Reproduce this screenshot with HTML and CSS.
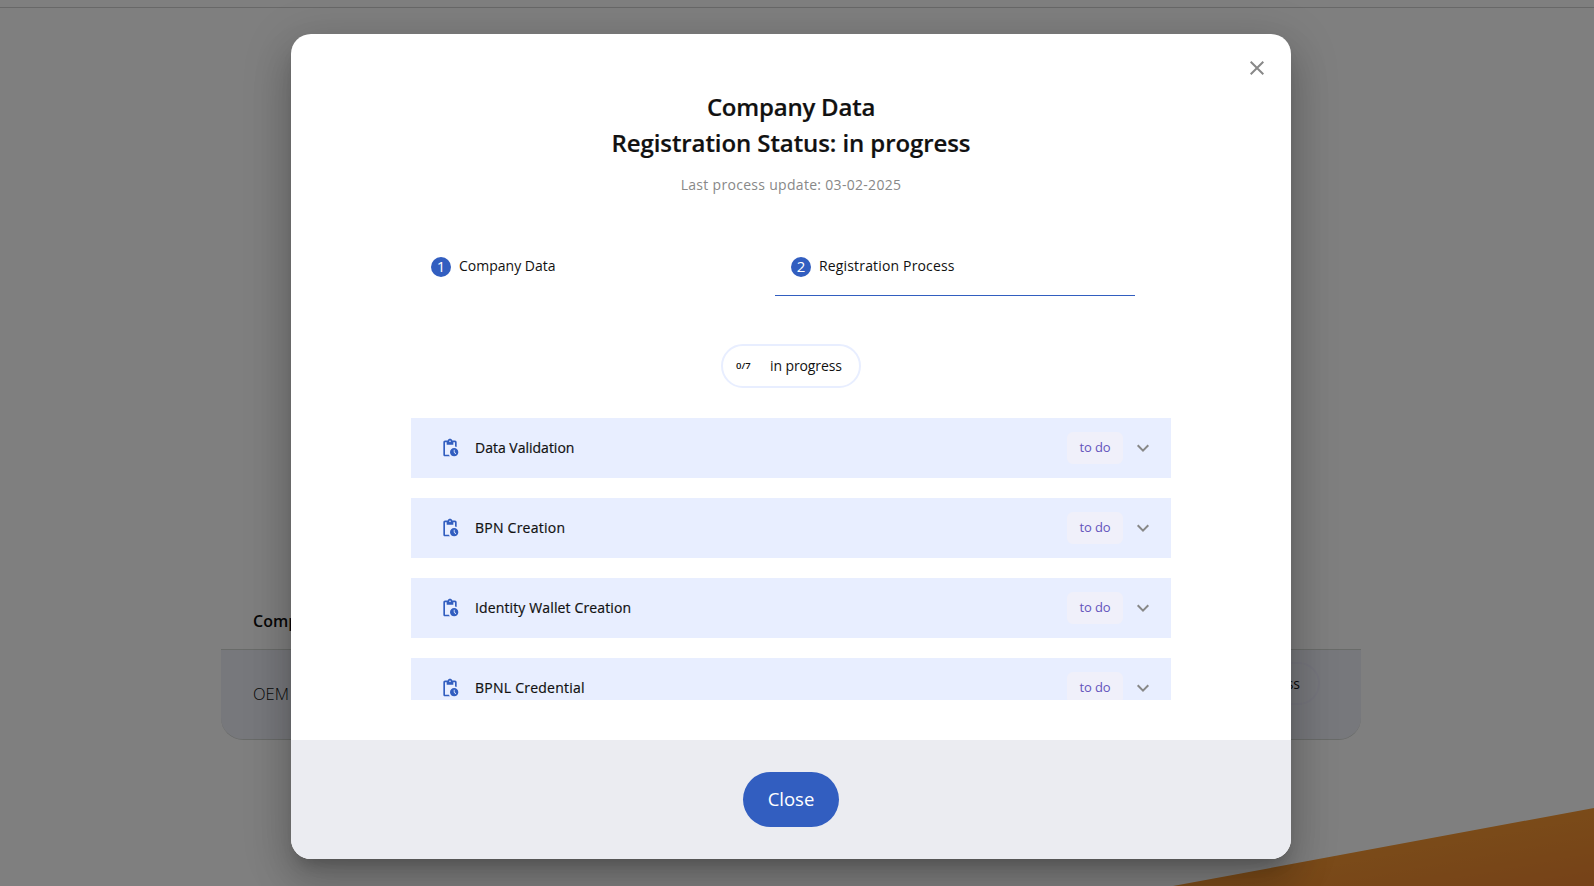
FILE: index.html
```html
<!DOCTYPE html>
<html lang="en">
<head>
<meta charset="utf-8">
<title>Company Data</title>
<link rel="stylesheet" href="styles.css">
</head>
<body>
<svg width="0" height="0" class="defs">
  <symbol id="pending" viewBox="0 0 24 24"><path d="M17 12c-2.76 0-5 2.24-5 5s2.24 5 5 5 5-2.24 5-5-2.240-5-5-5zm1.650 7.350L16.500 17.200V14h1v2.790l1.850 1.850-.7.710zM18 3h-3.180C14.400 1.840 13.300 1 12 1s-2.400.84-2.820 2H6c-1.100 0-2 .9-2 2v15c0 1.100.9 2 2 2h6.110c-.59-.57-1.070-1.250-1.420-2H6V5h2v3h8V5h2v5.080c.71.1 1.380.31 2 .6V5c0-1.100-.9-2-2-2zm-6 2c-.55 0-1-.45-1-1s.45-1 1-1 1 .45 1 1-.45 1-1 1z"/></symbol>
  <symbol id="chevron" viewBox="0 0 20 20"><path d="M4.700 7.300 10 12.600 15.300 7.300" fill="none" stroke="#888" stroke-width="2"/></symbol>
</svg>

<div class="page">
  <div class="page-top"></div>
  <div class="table">
    <div class="table-head">Company</div>
    <div class="table-row"><span>OEM</span><span class="table-pill">in progress</span></div>
  </div>
  <svg class="wedge" viewBox="0 0 421 78"><defs><linearGradient id="amber" x1="0" y1="0" x2="1" y2="1"><stop offset="0" stop-color="#f9a01c"/><stop offset=".5" stop-color="#f59632"/><stop offset="1" stop-color="#ec8430"/></linearGradient></defs><path d="M0 78 421 0V78z" fill="url(#amber)"/></svg>
</div>

<div class="backdrop">
  <div class="dialog">
    <svg class="dismiss" viewBox="0 0 14 14"><path d="M.7.7 13.300 13.300M13.300.7.7 13.300"/></svg>
    <div class="content">
      <h1 class="title"><span class="title-a">Company Data</span><br>Registration Status: in progress</h1>
      <p class="updated">Last process update: 03-02-2025</p>
      <div class="tabs">
        <div class="tab"><span class="step">1</span><span>Company Data</span></div>
        <div class="tab active"><span class="step">2</span><span class="tab-b">Registration Process</span></div>
      </div>
      <div class="progress"><b>0/7</b><span>in progress</span></div>
      <div class="list">
        <div class="item"><svg class="state"><use href="#pending"/></svg><span class="name">Data Validation</span><span class="chip">to do</span><svg class="arrow"><use href="#chevron"/></svg></div>
        <div class="item"><svg class="state"><use href="#pending"/></svg><span class="name wide">BPN Creation</span><span class="chip">to do</span><svg class="arrow"><use href="#chevron"/></svg></div>
        <div class="item"><svg class="state"><use href="#pending"/></svg><span class="name mid">Identity Wallet Creation</span><span class="chip">to do</span><svg class="arrow"><use href="#chevron"/></svg></div>
        <div class="item"><svg class="state"><use href="#pending"/></svg><span class="name wide">BPNL Credential</span><span class="chip">to do</span><svg class="arrow"><use href="#chevron"/></svg></div>
      </div>
    </div>
    <div class="footer"><button class="close">Close</button></div>
  </div>
</div>
</body>
</html>
```
FILE: styles.css
```css
* { box-sizing: border-box; }
body {
  margin: 0;
  height: 886px;
  overflow: hidden;
  position: relative;
  background: #fff;
  color: #111;
  font: 400 14px/20px "Open Sans", sans-serif;
}
.defs { position: absolute; }

.page { height: 886px; }
.page-top { height: 8px; border-bottom: 1px solid #d0d0d0; }
.table { width: 1140px; margin: 592px auto 0 221px; }
.table-head {
  height: 49px;
  padding: 11px 32px;
  font-size: 16px;
  font-weight: 600;
}
.table-row {
  display: flex;
  justify-content: space-between;
  height: 91px;
  padding: 12px 41px 0 32px;
  border: solid #d3d6d3;
  border-width: 1px 0;
  border-radius: 0 0 22px 22px;
  background: #eff1f9;
  font-size: 16.500px;
  font-weight: 300;
  line-height: 64px;
}
.table-pill {
  height: 43px;
  padding: 0 18px;
  border: 2px solid #eaeaf9;
  border-radius: 22px;
  font-size: 14px;
  font-weight: 400;
  line-height: 39px;
}
.wedge { position: absolute; right: 0; bottom: 0; width: 421px; height: 78px; }

.backdrop {
  position: absolute;
  inset: 0;
  display: flex;
  justify-content: center;
  padding-top: 34px;
  padding-right: 12px;
  background: rgba(0, 0, 0, .5);
}
.dialog {
  position: relative;
  display: flex;
  flex-direction: column;
  width: 1000px;
  height: 825px;
  overflow: hidden;
  border-radius: 20px;
  background: #fff;
  box-shadow: 0 11px 15px -7px rgba(0,0,0,.2), 0 24px 38px 3px rgba(0,0,0,.14), 0 9px 46px 8px rgba(0,0,0,.12);
}
.dismiss {
  position: absolute;
  top: 27px;
  right: 27px;
  width: 14px;
  height: 14px;
  stroke: #888;
  stroke-width: 2;
}
.content { height: 706px; padding: 55px 120px 0; }
.title {
  margin: 0;
  font-size: 24px;
  font-weight: 600;
  line-height: 36px;
  letter-spacing: -.09px;
  text-align: center;
  -webkit-text-stroke: .2px #111;
}
.title-a { letter-spacing: -.22px; }
.updated {
  margin: 14px 0 0;
  color: #888;
  letter-spacing: .3px;
  text-align: center;
}
.tabs { display: flex; padding: 55px 0 0 4px; }
.tab {
  display: flex;
  gap: 8px;
  width: 360px;
  height: 46px;
  padding-left: 16px;
  border-bottom: 1px solid transparent;
}
.tab.active { border-color: #325ec0; }
.tab-b { letter-spacing: .16px; }
.step {
  width: 20px;
  height: 20px;
  margin-top: 7px;
  border-radius: 50%;
  background: #325ec0;
  color: #fff;
  font-size: 15px;
  line-height: 18px;
  text-align: center;
}
.tab > span:last-child { margin-top: 6px; }
.progress {
  display: flex;
  align-items: center;
  gap: 19px;
  width: 140px;
  height: 44px;
  margin: 48px auto 30px;
  padding-left: 13px;
  border: 2px solid #e8eeff;
  border-radius: 22px;
}
.progress b { width: 15px; font-size: 9.500px; font-weight: 600; }
.progress span { letter-spacing: -.1px; }
.list {
  display: flex;
  flex-direction: column;
  gap: 20px;
  height: 282px;
  overflow: hidden;
}
.item {
  display: flex;
  flex: none;
  align-items: center;
  height: 60px;
  padding: 0 18px 0 29px;
  background: #e8eeff;
}
.state { width: 20px; height: 20px; margin-right: 15px; fill: #325ec0; }
.name { flex: 1; -webkit-text-stroke: .2px #111; }
.name.mid { letter-spacing: .13px; }
.name.wide { letter-spacing: .24px; }
.chip {
  width: 56px;
  height: 32px;
  margin-right: 10px;
  border-radius: 6px;
  background: #f0f0fa;
  color: #6454bc;
  font-size: 13px;
  line-height: 30px;
  letter-spacing: -.1px;
  text-align: center;
}
.arrow { width: 20px; height: 20px; }
.footer {
  display: flex;
  flex: 1;
  align-items: center;
  justify-content: center;
  background: #ebecf1;
}
.close {
  width: 96px;
  height: 55px;
  padding: 0 0 2px;
  border: 0;
  border-radius: 28px;
  background: #325ec0;
  color: #fff;
  font: 400 18.500px/24px "Open Sans", sans-serif;
}
```
